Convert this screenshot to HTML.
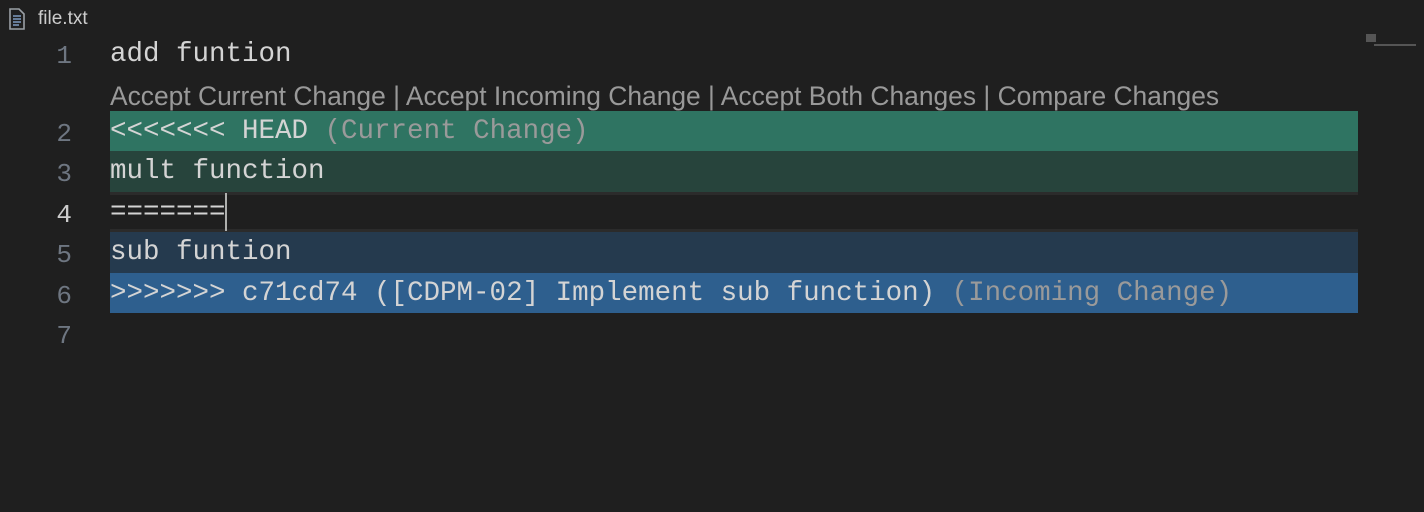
<!DOCTYPE html>
<html><head><style>
body{margin:0;width:1424px;height:512px;background:#1f1f1f;overflow:hidden;position:relative;font-family:"Liberation Mono",monospace;}
.tab{position:absolute;left:0;top:0;height:36px;width:1424px;}
.tab span{position:absolute;left:38px;top:8px;font:19px "Liberation Sans",sans-serif;color:#cccccc;}
.ln{position:absolute;left:0;width:72px;text-align:right;font-size:26px;color:#6e7681;line-height:40px;}
.row{position:absolute;left:110px;width:1248px;height:40px;}
.t{position:absolute;left:110px;font-size:27.5px;color:#d4d4d4;line-height:40px;white-space:pre;}
.g{color:#9a9a9a;}
</style></head><body>
<div class="tab">
<svg style="position:absolute;left:8px;top:8px" width="18" height="22" viewBox="0 0 18 22"><path d="M2 1h9l5 5v15H2z" fill="none" stroke="#9aa0a6" stroke-width="1.6"/><path d="M5 8h8M5 11h8M5 14h8M5 17h6" stroke="#7f9cc0" stroke-width="1.6"/></svg>
<span>file.txt</span></div>
<div class="row" style="top:111px;background:#2f7462"></div>
<div class="row" style="top:151px;height:41px;background:#27443c"></div>
<div class="row" style="top:192px;height:3px;background:#2b2b2b"></div>
<div class="row" style="top:229px;height:3px;background:#2b2b2b"></div>
<div class="row" style="top:232px;height:41px;background:#253a4e"></div>
<div class="row" style="top:273px;background:#2e5f8e"></div>
<div style="position:absolute;left:225px;top:193px;width:2px;height:38px;background:#aeafad"></div>
<div class="ln" style="top:36px">1</div>
<div class="ln" style="top:114px">2</div>
<div class="ln" style="top:154px">3</div>
<div class="ln" style="top:195px;color:#cccccc">4</div>
<div class="ln" style="top:235px">5</div>
<div class="ln" style="top:276px">6</div>
<div class="ln" style="top:316px">7</div>
<div class="t" style="top:35px">add funtion</div>
<div class="t" style="top:76px;font:26.4px 'Liberation Sans',sans-serif;line-height:40px;color:#999999">Accept Current Change | Accept Incoming Change | Accept Both Changes | Compare Changes</div>
<div class="t" style="top:112px">&lt;&lt;&lt;&lt;&lt;&lt;&lt; HEAD <span class="g">(Current Change)</span></div>
<div class="t" style="top:152px">mult function</div>
<div class="t" style="top:193px">=======</div>
<div class="t" style="top:233px">sub funtion</div>
<div class="t" style="top:274px">&gt;&gt;&gt;&gt;&gt;&gt;&gt; c71cd74 ([CDPM-02] Implement sub function) <span class="g">(Incoming Change)</span></div>
<div style="position:absolute;left:1366px;top:34px;width:10px;height:8px;background:#555"></div>
<div style="position:absolute;left:1374px;top:44px;width:42px;height:2px;background:#555"></div>
</body></html>
